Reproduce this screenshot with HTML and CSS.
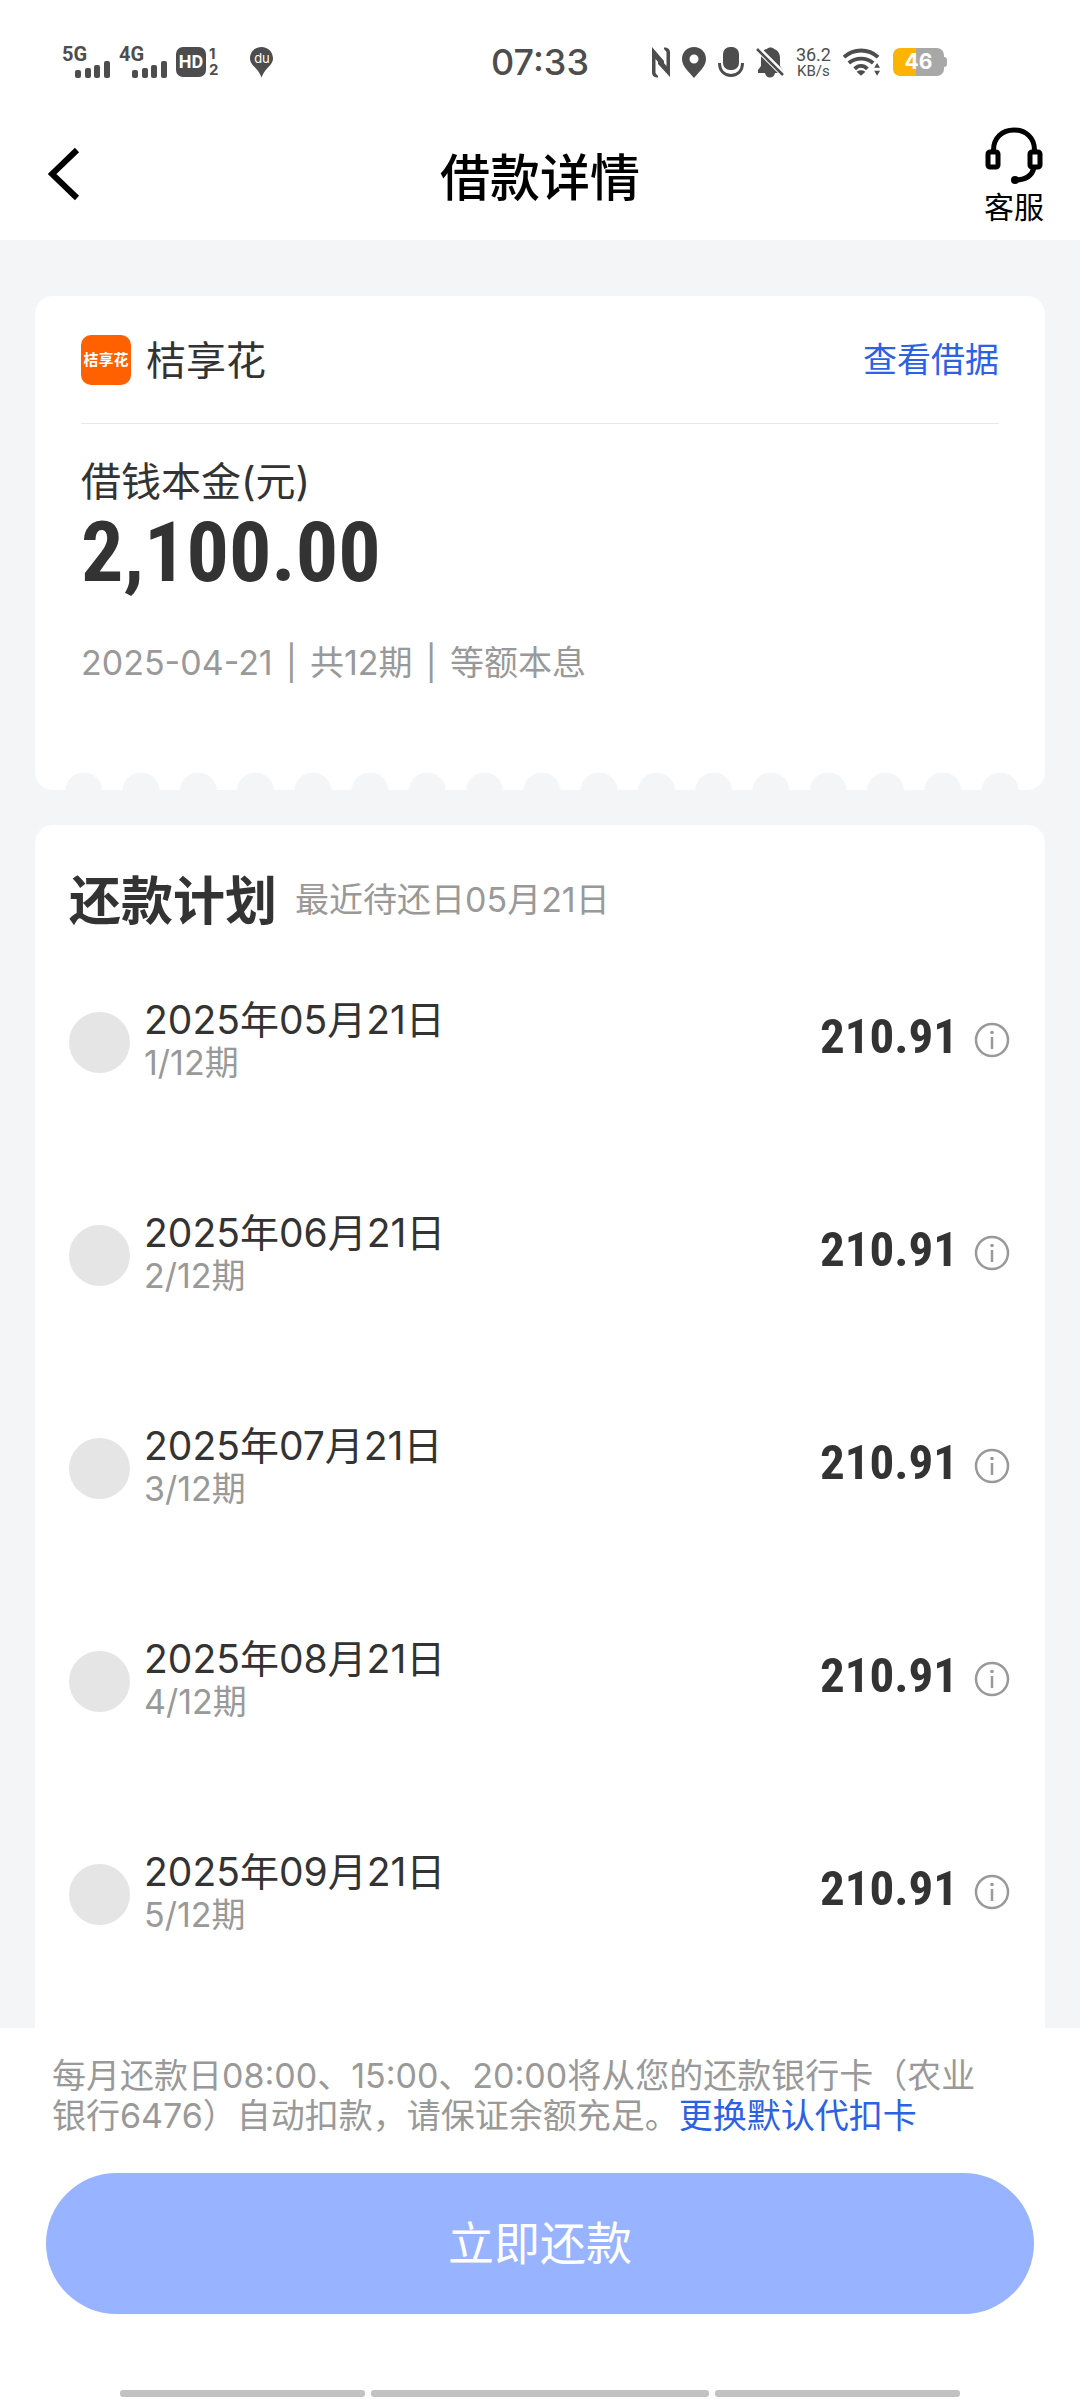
FILE: index.html
```html
<!DOCTYPE html>
<html lang="zh-CN">
<head>
    <meta charset="UTF-8">
    <meta name="viewport" content="width=device-width, initial-scale=1.0">
    <title>借款详情</title>
    <link rel="stylesheet" href="styles.css">
</head>
<body>
    <div class="status-bar">
        <div class="status-left">
            <div class="signal">
                <span class="net">5G</span>
                <svg width="35" height="17" viewBox="0 0 35 17" fill="#4d4d4d"><rect x="0" y="9" width="6" height="8" rx="2"/><rect x="10" y="7" width="6" height="10" rx="2"/><rect x="19" y="4" width="6" height="13" rx="2"/><rect x="29" y="0" width="6" height="17" rx="2"/></svg>
            </div>
            <div class="signal">
                <span class="net">4G</span>
                <svg width="35" height="17" viewBox="0 0 35 17" fill="#4d4d4d"><rect x="0" y="9" width="6" height="8" rx="2"/><rect x="10" y="7" width="6" height="10" rx="2"/><rect x="19" y="4" width="6" height="13" rx="2"/><rect x="29" y="0" width="6" height="17" rx="2"/></svg>
            </div>
            <span class="hd">HD</span>
            <span class="sims"><span>1</span><span>2</span></span>
            <div class="du">
                <svg width="23" height="31" viewBox="0 0 23 31"><path d="M11.500 0C5 0 0 5 0 11.500c0 4 3 7 5.500 9.500 2.500 2.600 4.500 5.500 6 9.500 1.500-4 3.500-6.900 6-9.500C20 18.500 23 15.500 23 11.500 23 5 18 0 11.500 0z" fill="#4d4d4d"/></svg>
                <span>du</span>
            </div>
        </div>
        <div class="clock">07:33</div>
        <div class="status-right">
            <svg width="18" height="31" viewBox="0 0 18 31" fill="#4d4d4d"><path d="M0 0l12 14v8L3.500 12v14l2.500 3v1.500C2 30.500 0 29 0 25z"/><path d="M18 30L6 17V9l8.500 10V5L12 2V.5C16 .5 18 2 18 6z"/></svg>
            <svg width="24" height="31" viewBox="0 0 24 31"><path fill="#4d4d4d" fill-rule="evenodd" d="M12 0C5 0 0 5 0 12c0 7 6 12 12 19 6-7 12-12 12-19C24 5 19 0 12 0zm0 7.500a4.500 4.500 0 1 1 0 9 4.500 4.500 0 0 1 0-9z"/></svg>
            <svg width="26" height="31" viewBox="0 0 26 31"><rect x="5" y="0" width="16" height="23" rx="7" fill="#4d4d4d"/><path d="M1.500 16c0 8 5 12.500 11.500 12.500S24.500 24 24.500 16" fill="none" stroke="#4d4d4d" stroke-width="3"/></svg>
            <svg width="28" height="31" viewBox="0 0 28 31"><path fill="#4d4d4d" d="M2 26v-3l3-4v-8C5 5 8 2 11 2c1-2 6-2 7 0 4 1 6 5 6 9v8l3 4v3h-8c-1 6-9 6-10 0z"/><path d="M-1-1l29 29" stroke="#fff" stroke-width="6"/><path d="M1 2l26 26" stroke="#4d4d4d" stroke-width="2.500"/></svg>
            <span class="speed"><span class="rate">36.2</span><span>KB/s</span></span>
            <svg width="38" height="30" viewBox="0 0 39 30"><g fill="none" stroke="#4d4d4d" stroke-width="4"><path d="M1 10C11 1 26 1 36 10"/><path d="M6 16c7-6 18-6 25 0"/><path d="M12 22c4-4 9-4 13 0"/></g><path fill="#4d4d4d" d="M14 25c3-2 6-2 9 0l-4.500 4zM35 16l3 5h-6zM35 29l3-5h-6z"/></svg>
            <span class="battery">46</span>
        </div>
    </div>

    <header class="header">
        <button class="back" aria-label="返回">
            <svg width="32" height="54" viewBox="0 0 32 54" fill="none" stroke="#000" stroke-width="6"><path d="M29 3L4 27l25 24"/></svg>
        </button>
        <h1>借款详情</h1>
        <button class="service">
            <svg width="58" height="58" viewBox="0 0 58 58" fill="none" stroke="#000" stroke-width="5"><path d="M8.500 23C8.500 11 17 3 29 3s20.500 8 20.500 20"/><rect x="3" y="25" width="10" height="15" rx="2"/><rect x="45" y="25" width="10" height="15" rx="2"/><path d="M49 41c-2 7-8 12-19 12"/><circle cx="30" cy="53" r="4" fill="#000" stroke="none"/></svg>
            <span>客服</span>
        </button>
    </header>

    <main class="content">
        <section class="card loan">
            <div class="loan-head">
                <span class="logo">桔享花</span>
                <span class="loan-name">桔享花</span>
                <a href="#" class="link">查看借据</a>
            </div>
            <p class="loan-label">借钱本金(元)</p>
            <p class="loan-amount">2,100.00</p>
            <p class="loan-info"><span>2025-04-21</span><span>共12期</span><span>等额本息</span></p>
            <div class="notches"></div>
        </section>

        <section class="card plan">
            <div class="plan-head">
                <h2>还款计划</h2>
                <span>最近待还日05月21日</span>
            </div>
            <ul class="plan-list" id="planList"></ul>
        </section>
    </main>

    <footer class="footer">
        <p class="notice">每月还款日08:00、15:00、20:00将从您的还款银行卡（农业银行6476）自动扣款，请保证余额充足。<a href="#">更换默认代扣卡</a></p>
        <button class="repay">立即还款</button>
        <div class="nav-bars"><i></i><i class="wide"></i><i></i></div>
    </footer>

    <script>
        const months = ["05", "06", "07", "08", "09"];
        const list = document.getElementById("planList");

        months.forEach((month, i) => {
            const li = document.createElement("li");
            li.innerHTML = `
                <span class="dot"></span>
                <div class="term">
                    <p class="date">2025年${month}月21日</p>
                    <p class="no">${i + 1}/12期</p>
                </div>
                <span class="money">210.91</span>
                <button class="info" aria-label="详情">
                    <svg width="36" height="36" viewBox="0 0 36 36" fill="none" stroke="#999" stroke-width="2.500"><circle cx="18" cy="18" r="16"/><path d="M18 15v12"/><circle cx="18" cy="10.500" r="1.800" fill="#999" stroke="none"/></svg>
                </button>`;
            list.appendChild(li);
        });
    </script>
</body>
</html>
```
FILE: styles.css
```css
* {
    box-sizing: border-box;
    margin: 0;
    padding: 0;
}
body {
    font-family: Inter, "Noto Sans CJK SC", sans-serif;
    background: #f4f5f7;
    color: #333;
    height: 100vh;
    display: flex;
    flex-direction: column;
    overflow: hidden;
}
button {
    border: none;
    background: none;
    font-family: inherit;
    cursor: pointer;
}
a {
    color: #2b62e3;
    text-decoration: none;
}
svg {
    display: block;
    flex: none;
}

/* status bar */
.status-bar {
    display: grid;
    grid-template-columns: 1fr auto 1fr;
    align-items: center;
    height: 124px;
    padding: 0 62px;
    background: #fff;
    color: #4d4d4d;
    flex: none;
}
.status-left, .status-right {
    display: flex;
    align-items: center;
}
.signal {
    position: relative;
    width: 48px;
    height: 32px;
    margin-right: 9px;
    display: flex;
    align-items: flex-end;
    justify-content: flex-end;
}
.net {
    position: absolute;
    left: 0;
    top: 0;
    font-family: Roboto, sans-serif;
    font-size: 20px;
    line-height: 16px;
    font-weight: bold;
}
.hd {
    width: 30px;
    height: 30px;
    border-radius: 7px;
    background: #4d4d4d;
    color: #fff;
    font-family: Roboto, sans-serif;
    font-size: 18px;
    line-height: 30px;
    font-weight: bold;
    text-align: center;
}
.sims {
    display: flex;
    flex-direction: column;
    margin-left: 3px;
    font-size: 15px;
    line-height: 16px;
    font-weight: bold;
}
.du {
    position: relative;
    margin-left: 32px;
}
.du span {
    position: absolute;
    left: 0;
    right: 0;
    top: 3px;
    text-align: center;
    color: #fff;
    font-size: 13px;
    line-height: 16px;
}
.clock {
    font-size: 36px;
    font-weight: 500;
}
.status-right {
    justify-content: flex-end;
    gap: 12px;
    padding-right: 74px;
}
.speed {
    display: flex;
    flex-direction: column;
    font-family: Roboto, sans-serif;
    font-size: 15px;
    line-height: 15px;
    text-align: center;
}
.rate {
    font-size: 18px;
    line-height: 18px;
}
.battery {
    position: relative;
    width: 51px;
    height: 28px;
    border-radius: 7px;
    background: linear-gradient(to right, #fbb400 46%, #a8a8a8 46%);
    color: #fff;
    font-size: 21px;
    line-height: 28px;
    font-weight: bold;
    text-align: center;
}
.battery::after {
    content: "";
    position: absolute;
    right: -3px;
    top: 9px;
    width: 3px;
    height: 10px;
    border-radius: 0 3px 3px 0;
    background: #a8a8a8;
}

/* header */
.header {
    display: grid;
    grid-template-columns: 1fr auto 1fr;
    align-items: center;
    height: 116px;
    padding: 0 36px 8px;
    background: #fff;
    color: #000;
    flex: none;
}
.back {
    justify-self: start;
    margin: 0 0 8px 12px;
}
.header h1 {
    font-size: 50px;
    line-height: 72px;
    font-weight: 500;
}
.service {
    justify-self: end;
    display: flex;
    flex-direction: column;
    align-items: center;
    font-size: 30px;
    line-height: 44px;
    color: #000;
}

/* cards */
.content {
    flex: 1;
    min-height: 0;
    overflow: hidden;
    padding: 56px 35px 0;
}
.card {
    background: #fff;
    border-radius: 18px;
}
.loan {
    position: relative;
    padding: 0 46px 102px;
    margin-bottom: 35px;
}
.loan-head {
    display: flex;
    align-items: center;
    height: 128px;
    border-bottom: 1px solid #e8e8e8;
    font-size: 40px;
}
.loan-name, .link {
    padding-bottom: 4px;
}
.logo {
    width: 50px;
    height: 50px;
    margin-right: 15px;
    border-radius: 10px;
    background: #ff6000;
    color: #fff;
    font-size: 15px;
    line-height: 50px;
    font-weight: bold;
    text-align: center;
}
.link {
    margin-left: auto;
    font-size: 34px;
}
.loan-label {
    margin-top: 30px;
    font-size: 40px;
    line-height: 56px;
}
.loan-amount {
    font-family: "Roboto Condensed", Roboto, sans-serif;
    font-size: 84px;
    line-height: 86px;
    font-weight: bold;
}
.loan-info {
    display: flex;
    margin-top: 42px;
    font-size: 34px;
    line-height: 50px;
    color: #999;
}
.loan-info span + span::before {
    content: "|";
    margin: 0 13px;
}
.notches {
    position: absolute;
    left: 20px;
    right: 16px;
    bottom: 0;
    height: 17px;
    background: radial-gradient(circle at 50% 18px, #f4f5f7 18px, transparent 19px);
    background-size: 57px 17px;
    background-repeat: round no-repeat;
}

/* plan */
.plan {
    padding: 36px 35px 100px 34px;
}
.plan-head {
    display: flex;
    align-items: center;
    height: 72px;
    gap: 18px;
    font-size: 34px;
    color: #999;
}
.plan-head h2 {
    font-size: 52px;
    color: #333;
}
.plan-list {
    list-style: none;
}
.plan-list li {
    display: flex;
    align-items: center;
    height: 213px;
}
.dot {
    width: 61px;
    height: 61px;
    margin: 6px 14px 0 0;
    border-radius: 50%;
    background: #e5e5e5;
}
.date {
    font-size: 39px;
    line-height: 46px;
}
.no {
    font-size: 34px;
    line-height: 40px;
    color: #999;
}
.money {
    margin: 0 0 6px auto;
    font-family: "Roboto Condensed", Roboto, sans-serif;
    font-size: 49px;
    font-weight: bold;
}
.info {
    margin-left: 16px;
}

/* footer */
.footer {
    flex: none;
    padding: 28px 46px 3px;
    background: #fff;
}
.notice {
    padding: 0 32px 0 6px;
    font-size: 34px;
    line-height: 40px;
    color: #999;
}
.repay {
    display: block;
    width: 100%;
    height: 141px;
    margin-top: 37px;
    padding-bottom: 8px;
    border-radius: 71px;
    background: #98b3ff;
    color: #fff;
    font-size: 46px;
}
.nav-bars {
    display: flex;
    gap: 6px;
    margin-top: 76px;
    padding: 0 74px;
}
.nav-bars i {
    flex: 245;
    height: 7px;
    border-radius: 3px;
    background: #c2c2c2;
}
.nav-bars .wide {
    flex: 338;
}
```
